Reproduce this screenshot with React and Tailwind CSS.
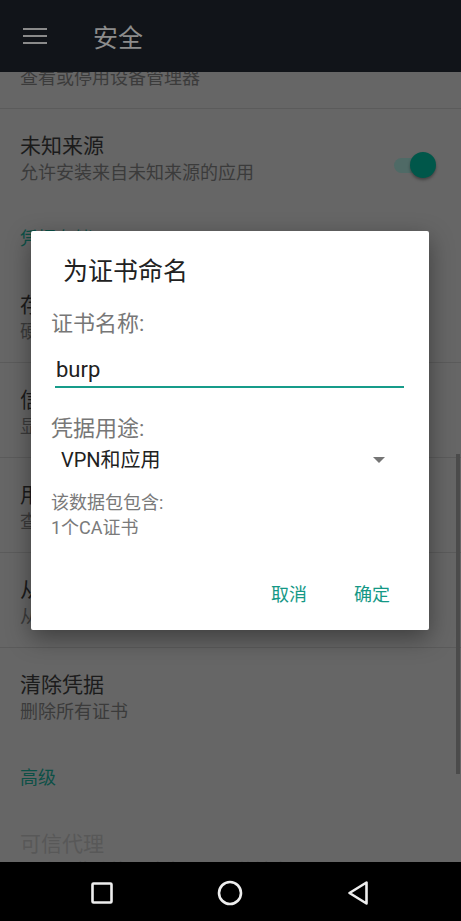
import React from "react";

const CJK = { fontFamily: "'Noto Sans CJK SC', 'Noto Sans', sans-serif" };
const MIX = { fontFamily: "Roboto, 'Noto Sans CJK SC', sans-serif" };

function Row({ title, sub, border = true, disabled = false, right = null }) {
  return (
    <div
      className={`h-[95px] shrink-0 pt-[21px] pl-[20px] pr-[24px] flex items-start justify-between ${
        border ? "border-b border-[#5b5b5b]" : ""
      }`}
    >
      <div className="flex flex-col">
        <div
          className={`text-[21px] leading-[28px] ${disabled ? "text-[#585858]" : "text-[#1b1b1b]"}`}
        >
          {title}
        </div>
        <div
          className={`text-[18px] leading-[26px] whitespace-nowrap ${
            disabled ? "text-[#5a5a5a]" : "text-[#3b3b3b]"
          }`}
        >
          {sub}
        </div>
      </div>
      {right}
    </div>
  );
}

function Header({ text }) {
  return (
    <div className="h-[64px] shrink-0 pt-[21px] pl-[20px]">
      <div className="text-[18px] leading-[24px] text-[#0c5046]">{text}</div>
    </div>
  );
}

function Toggle() {
  return (
    <div className="relative w-[42px] h-[26px] mt-[22px] mr-[1px]">
      <div className="absolute left-0 top-[6px] w-[38px] h-[15px] rounded-full bg-[#4f6a66]" />
      <div className="absolute right-0 top-0 w-[26px] h-[26px] rounded-full bg-[#00574a] shadow-[0_2px_3px_rgba(0,0,0,0.35)]" />
    </div>
  );
}

export default function App() {
  return (
    <div className="relative w-[461px] h-[921px] flex flex-col overflow-hidden bg-[#666666]" style={CJK}>
      {/* top bar */}
      <div className="h-[72px] shrink-0 bg-[#111419] flex items-center z-10">
        <div className="ml-[23px] w-[24px] flex flex-col gap-[5px]">
          <div className="h-[2px] bg-[#8a8a8a]" />
          <div className="h-[2px] bg-[#8a8a8a]" />
          <div className="h-[2px] bg-[#8a8a8a]" />
        </div>
        <div className="ml-[46px] text-[25px] leading-[30px] text-[#8c8c8c]">安全</div>
      </div>

      {/* list */}
      <div className="flex-1 overflow-hidden">
        <div className="flex flex-col mt-[-58px]">
          <Row title="设备管理器" sub="查看或停用设备管理器" />
          <Row title="未知来源" sub="允许安装来自未知来源的应用" border={false} right={<Toggle />} />
          <Header text="凭据存储" />
          <Row title="存储类型" sub="硬件支持" />
          <Row title="信任的凭据" sub="显示可信的CA证书" />
          <Row title="用户凭据" sub="查看和修改存储的凭据" />
          <Row title="从存储设备安装" sub="从存储设备安装证书" />
          <Row title="清除凭据" sub="删除所有证书" border={false} />
          <Header text="高级" />
          <Row title="可信代理" sub="要使用此功能，请先设置屏幕锁定" disabled border={false} />
        </div>
      </div>

      {/* nav bar */}
      <div className="h-[59px] shrink-0 bg-black flex items-center">
        <svg className="absolute left-[88px] bottom-[14px]" width="28" height="28" viewBox="0 0 28 28">
          <rect x="4.5" y="4.5" width="19" height="19" rx="1" fill="none" stroke="#eeeeee" strokeWidth="2.6" />
        </svg>
        <svg className="absolute left-[216px] bottom-[14px]" width="28" height="28" viewBox="0 0 28 28">
          <circle cx="14" cy="14" r="11" fill="none" stroke="#eeeeee" strokeWidth="2.6" />
        </svg>
        <svg className="absolute left-[344px] bottom-[14px]" width="28" height="28" viewBox="0 0 28 28">
          <path d="M5.5 14 L22.5 3.5 L22.5 24.5 Z" fill="none" stroke="#eeeeee" strokeWidth="2.6" strokeLinejoin="round" />
        </svg>
      </div>

      {/* scrollbar */}
      <div className="absolute left-[456px] top-[454px] w-[4px] h-[320px] bg-[#4b4b4b]" />

      {/* dialog */}
      <div
        className="absolute left-[31px] top-[231px] w-[398px] h-[399px] bg-white rounded-[2px] shadow-[0_8px_24px_rgba(0,0,0,0.4)] flex flex-col"
        style={MIX}
      >
        <div className="pt-[26px] pl-[32px] text-[25px] leading-[30px] text-[#212121]">为证书命名</div>
        <div className="mt-[23px] pl-[20px] text-[22px] leading-[28px] text-[#777777]">证书名称:</div>
        <div className="mt-[17px] ml-[24px] w-[349px] border-b-2 border-[#179c8a] pb-[1px]">
          <div className="pl-[1px] text-[22px] leading-[30px] text-[#212121]">burp</div>
        </div>
        <div className="mt-[27px] pl-[20px] text-[22px] leading-[28px] text-[#777777]">凭据用途:</div>
        <div className="mt-[3px] pl-[30px] pr-[44px] flex items-center justify-between h-[28px]">
          <div className="text-[20px] leading-[28px] text-[#212121]">VPN和应用</div>
          <svg width="12" height="6" viewBox="0 0 12 6">
            <path d="M0 0 L12 0 L6 6 Z" fill="#757575" />
          </svg>
        </div>
        <div className="mt-[17px] pl-[20px] text-[18px] leading-[24px] text-[#7a7a7a]">
          <div>该数据包包含:</div>
          <div className="mt-[1px]">1个CA证书</div>
        </div>
        <div className="mt-[36px] pr-[23px] flex justify-end gap-[15px]">
          <div className="h-[36px] px-[16px] flex items-center text-[18px] text-[#149886]">取消</div>
          <div className="h-[36px] px-[16px] flex items-center text-[18px] text-[#149886]">确定</div>
        </div>
      </div>
    </div>
  );
}
